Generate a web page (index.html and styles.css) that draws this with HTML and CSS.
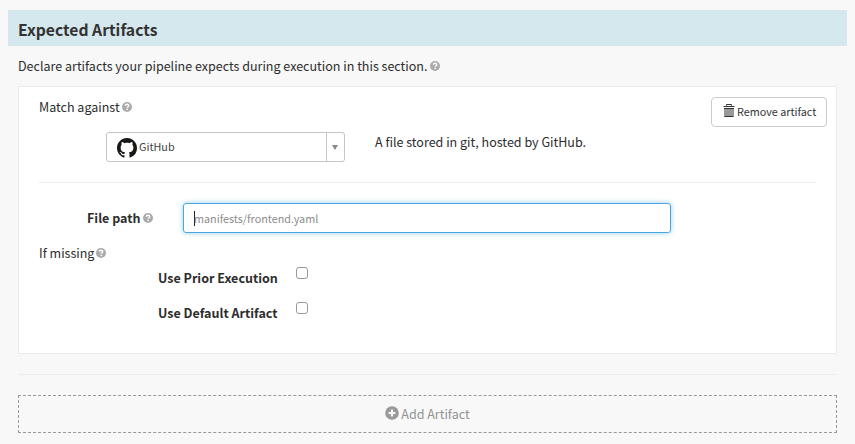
FILE: index.html
```
<!DOCTYPE html>
<html lang="en">
<head>
<meta charset="utf-8">
<title>Expected Artifacts</title>
<link rel="stylesheet" href="styles.css">
</head>
<body>
<svg class="defs" aria-hidden="true">
  <symbol id="help" viewBox="0 0 20 20">
    <circle cx="10" cy="10" r="10" fill="#ababab"/>
    <path d="M6.6 7.6C6.7 5.6 8 4.6 10 4.6c2 0 3.4 1 3.4 2.7 0 2.3-2.9 2.2-2.9 4.3" fill="none" stroke="#fff" stroke-width="2.8"/>
    <rect x="8.9" y="13.4" width="3" height="2.8" fill="#fff"/>
  </symbol>
</svg>
<section class="stage">
  <h4 class="heading"><span class="t-heading">Expected Artifacts</span></h4>
  <div class="content">
    <p class="intro"><span class="t-intro">Declare artifacts your pipeline expects during execution in this section.</span><svg class="help"><use href="#help"/></svg></p>
    <div class="card">
      <div class="top">
        <div class="match">
          <p class="line"><span class="t-match">Match against</span><svg class="help"><use href="#help"/></svg></p>
          <div class="kind">
            <div class="select">
              <div class="value">
                <svg class="github" viewBox="0 0 16 16"><path fill="#191717" d="M8 0C3.58 0 0 3.58 0 8c0 3.54 2.29 6.53 5.47 7.59.4.07.55-.17.55-.38 0-.19-.01-.82-.01-1.49-2.01.37-2.53-.49-2.69-.94-.09-.23-.48-.94-.82-1.13-.28-.15-.68-.52-.01-.53.63-.01 1.08.58 1.23.82.72 1.21 1.87.87 2.33.66.07-.52.28-.87.51-1.07-1.78-.2-3.64-.89-3.64-3.95 0-.87.31-1.59.82-2.15-.08-.2-.36-1.02.08-2.12 0 0 .67-.21 2.2.82.64-.18 1.32-.27 2-.27s1.36.09 2 .27c1.53-1.04 2.2-.82 2.2-.82.44 1.1.16 1.92.08 2.12.51.56.82 1.27.82 2.15 0 3.07-1.87 3.75-3.65 3.95.29.25.54.73.54 1.48 0 1.07-.01 1.93-.01 2.2 0 .21.15.46.55.38A8.01 8.01 0 0 0 16 8c0-4.42-3.58-8-8-8z"/></svg>
                <span class="t-github">GitHub</span>
              </div>
              <div class="arrow"><i></i></div>
            </div>
            <span class="t-desc">A file stored in git, hosted by GitHub.</span>
          </div>
        </div>
        <button class="remove">
          <svg class="trash" viewBox="0 0 12 13"><path d="M1 4h10v7.5q0 1.5-1.2 1.5H2.2Q1 13 1 11.500z" fill="#999"/><path d="M3.500 1.700V.5h5v1.200M.5 2.500h11M1 4.500h10M1.500 12.500h9" fill="none" stroke="#333"/></svg>
          <span class="t-remove">Remove artifact</span>
        </button>
      </div>
      <div class="rule"></div>
      <div class="path">
        <div class="label"><span class="t-path">File path</span><svg class="help"><use href="#help"/></svg></div>
        <div class="input"><i class="caret"></i><span class="t-place">manifests/frontend.yaml</span></div>
      </div>
      <p class="line missing"><span class="t-missing">If missing</span><svg class="help"><use href="#help"/></svg></p>
      <label class="check"><span class="t-prior">Use Prior Execution</span><i class="box"></i></label>
      <label class="check"><span class="t-default">Use Default Artifact</span><i class="box"></i></label>
    </div>
    <div class="rule outer"></div>
    <button class="add">
      <svg class="plus" viewBox="0 0 14 14"><circle cx="7" cy="7" r="6.8" fill="#999"/><path d="M7 3.5v7M3.5 7h7" stroke="#f8f8f8" stroke-width="2.2"/></svg>
      <span class="t-add">Add Artifact</span>
    </button>
  </div>
</section>
</body>
</html>
```
FILE: styles.css
```
* { box-sizing: border-box; }
body {
  margin: 0;
  background: #f8f8f8;
  color: #2d2d2d;
  font: 12.53px/20px "Noto Sans CJK SC", "Noto Sans", sans-serif;
  white-space: nowrap;
}
p, h4 { margin: 0; }
button { font: inherit; cursor: pointer; }
.defs { position: absolute; width: 0; height: 0; }
.stage { padding: 10px 8px 0; }
.heading {
  display: flex;
  align-items: center;
  height: 36px;
  padding: 4px 0 0 10px;
  background: #d4e8ed;
  color: #333;
  font-size: 15.7px;
}
.content { padding: 10px 10px 0; }
.intro, .line { display: flex; align-items: center; height: 20px; }
.help { width: 10px; height: 10px; margin-left: 3px; flex: none; }
.line .help, .label .help { margin-left: 2px; }
.card {
  height: 268px;
  margin-top: 10px;
  padding: 10px 20px 0;
  border: 1px solid #ececec;
  background: #fff;
}
.top { display: flex; justify-content: space-between; height: 85px; margin-right: -11px; }
.kind { display: flex; margin: 15px 0 0 67px; }
.select {
  display: flex;
  width: 239px;
  height: 30px;
  margin-right: 30px;
  border: 1px solid #c5c5c5;
  border-radius: 3px;
  font-size: 10.8px;
  color: #444;
}
.value { display: flex; flex: 1; align-items: center; padding-left: 10px; }
.value span, .remove span { padding-bottom: 2px; }
.github { width: 20px; height: 20px; margin: 2px 2px 0 0; }
.arrow {
  display: flex;
  align-items: center;
  justify-content: center;
  width: 18px;
  border-left: 1px solid #c5c5c5;
}
.arrow i { border: 3.5px solid transparent; border-top: 5px solid #888; border-bottom: 0; margin-right: 1px; }
.remove {
  display: flex;
  align-items: center;
  width: 116px;
  height: 30px;
  padding: 0 0 0 11px;
  border: 1px solid #ccc;
  border-radius: 4px;
  background: #fff;
  color: #333;
  font-size: 10.8px;
}
.trash { width: 12px; height: 13px; margin: -3px 2px 0 0; }
.rule { height: 1px; background: #ececec; }
.path { display: flex; align-items: center; height: 30px; margin: 20px 0 10px; font-weight: bold; }
.label { display: flex; align-items: center; width: 144px; padding-left: 48px; }
.input {
  display: flex;
  align-items: center;
  width: 488px;
  height: 30px;
  padding-left: 10px;
  border: 1px solid #4ba6e3;
  border-radius: 3px;
  box-shadow: 0 0 5px rgba(75, 170, 233, .6);
  color: #8c8c8c;
  font-size: 10.8px;
  font-weight: normal;
}
.caret { width: 1px; height: 15px; margin-right: -1px; background: #222; }
.check { display: flex; height: 20px; margin: 5px 0 15px 119px; font-weight: bold; }
.check span { width: 138px; }
.box { width: 12px; height: 12px; border: 1px solid #999; border-radius: 3px; margin-top: -1px; }
.outer { margin: 20px 0; }
.add {
  display: flex;
  align-items: center;
  justify-content: center;
  width: 819px;
  height: 38px;
  padding: 0;
  border: 1px dashed #999;
  background: transparent;
  color: #939393;
}
.plus { width: 14px; height: 14px; margin: -2px 2px 0 0; }
```
